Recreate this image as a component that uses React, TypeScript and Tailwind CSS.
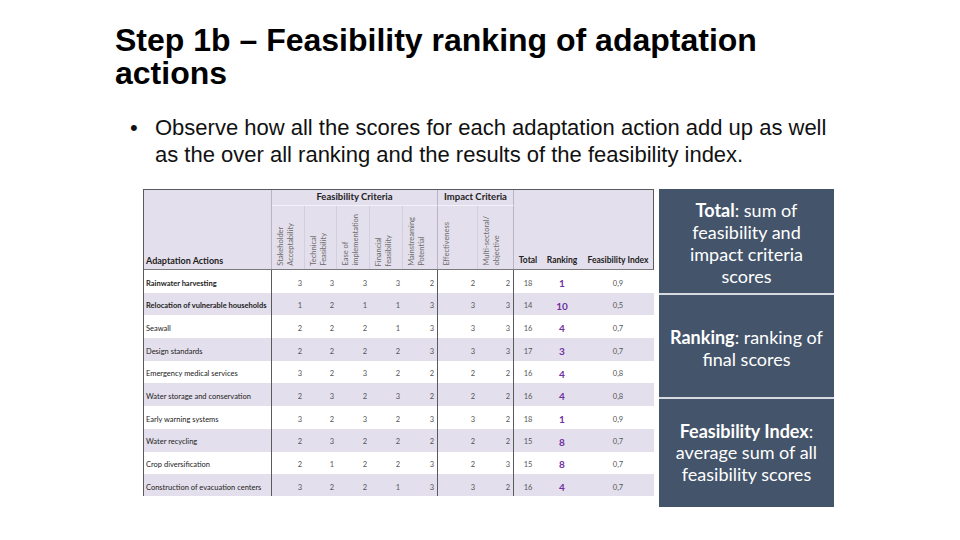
import React from 'react';

type Row = {
  name: string;
  strong?: boolean;
  feas: number[];
  impact: number[];
  total: number;
  rank: number;
  index: string;
};

const ROWS: Row[] = [
  { name: 'Rainwater harvesting', strong: true, feas: [3, 3, 3, 3, 2], impact: [2, 2], total: 18, rank: 1, index: '0,9' },
  { name: 'Relocation of vulnerable households', strong: true, feas: [1, 2, 1, 1, 3], impact: [3, 3], total: 14, rank: 10, index: '0,5' },
  { name: 'Seawall', feas: [2, 2, 2, 1, 3], impact: [3, 3], total: 16, rank: 4, index: '0,7' },
  { name: 'Design standards', feas: [2, 2, 2, 2, 3], impact: [3, 3], total: 17, rank: 3, index: '0,7' },
  { name: 'Emergency medical services', feas: [3, 2, 3, 2, 2], impact: [2, 2], total: 16, rank: 4, index: '0,8' },
  { name: 'Water storage and conservation', feas: [2, 3, 2, 3, 2], impact: [2, 2], total: 16, rank: 4, index: '0,8' },
  { name: 'Early warning systems', feas: [3, 2, 3, 2, 3], impact: [3, 2], total: 18, rank: 1, index: '0,9' },
  { name: 'Water recycling', feas: [2, 3, 2, 2, 2], impact: [2, 2], total: 15, rank: 8, index: '0,7' },
  { name: 'Crop diversification', feas: [2, 1, 2, 2, 3], impact: [2, 3], total: 15, rank: 8, index: '0,7' },
  { name: 'Construction of evacuation centers', feas: [3, 2, 2, 1, 3], impact: [3, 2], total: 16, rank: 4, index: '0,7' },
];

const CRITERIA: string[][] = [
  ['Stakeholder', 'Acceptability'],
  ['Technical', 'Feasibility'],
  ['Ease of', 'implementation'],
  ['Financial', 'feasibility'],
  ['Mainstreaming', 'Potential'],
  ['Effectiveness'],
  ['Multi-sectoral/', 'objective'],
];

const COLS = 'grid grid-cols-[128px_33px_32px_33px_33px_35px_40px_36px_28px_40px_72px]';

function RotatedHead({ lines, last }: { lines: string[]; last?: boolean }) {
  return (
    <div
      className={`flex items-end justify-start pl-[4px] pb-[3px] border-r ${
        last ? 'border-[#b9b4c6]' : 'border-[#d3cfdc]'
      }`}
    >
      <span className="[writing-mode:vertical-rl] rotate-180 text-[7.5px] leading-[10px] text-[#6a6a6a]">
        {lines.map((l, i) => (
          <React.Fragment key={i}>
            {i > 0 && <br />}
            {l}
          </React.Fragment>
        ))}
      </span>
    </div>
  );
}

function ScoreTable() {
  return (
    <div className="w-[511px] h-[307px] overflow-hidden border-l border-t border-[#5a5a5a] font-['Lato','Open_Sans',sans-serif] text-[#333]">
      {/* Header */}
      <div className={`${COLS} grid-rows-[16px_63px] bg-[#e4dfec] border-b border-[#7a7a7a] border-r border-r-[#5a5a5a]`}>
        <div className="row-span-2 flex items-end pl-[2px] pb-[2px] border-r border-[#b9b4c6] text-[9px] font-bold text-[#222]">
          Adaptation Actions
        </div>
        <div className="col-span-5 flex items-center justify-center border-b border-r border-[#f4f2f8] border-r-[#b9b4c6] text-[9.5px] font-bold text-[#222]">
          Feasibility Criteria
        </div>
        <div className="col-span-2 flex items-center justify-center border-b border-r border-[#f4f2f8] border-r-[#b9b4c6] text-[9.5px] font-bold text-[#222]">
          Impact Criteria
        </div>
        <div className="row-span-2 flex items-end justify-center pb-[2px] text-[8.5px] font-bold text-[#222]">Total</div>
        <div className="row-span-2 flex items-end justify-center pb-[2px] text-[8.5px] font-bold text-[#222]">Ranking</div>
        <div className="row-span-2 flex items-end justify-center pb-[2px] text-[8.5px] font-bold text-[#222] whitespace-nowrap">
          Feasibility Index
        </div>
        {CRITERIA.map((c, i) => (
          <RotatedHead key={i} lines={c} last={i === 4 || i === 6} />
        ))}
      </div>

      {/* Rows */}
      {ROWS.map((r, i) => (
        <div
          key={r.name}
          className={`${COLS} h-[22.7px] text-[7.5px] leading-none ${i % 2 === 1 ? 'bg-[#e4dfec]' : 'bg-white'}`}
        >
          <div
            className={`flex items-center pl-[2px] pt-[4px] border-r border-[#5a5a5a] whitespace-nowrap text-[#222] ${
              r.strong ? 'font-bold' : ''
            }`}
          >
            {r.name}
          </div>
          {r.feas.map((v, j) => (
            <div
              key={j}
              className={`flex items-center justify-end pr-[3px] pt-[4px] text-[#555] ${
                j === 4 ? 'border-r border-[#5a5a5a]' : ''
              }`}
            >
              {v}
            </div>
          ))}
          {r.impact.map((v, j) => (
            <div
              key={j}
              className={`flex items-center justify-end pr-[3px] pt-[4px] text-[#555] ${
                j === 1 ? 'border-r border-[#5a5a5a]' : ''
              }`}
            >
              {v}
            </div>
          ))}
          <div className="flex items-center justify-center pt-[4px] text-[#555]">{r.total}</div>
          <div className="flex items-center justify-center pt-[3px] text-[10px] font-bold text-[#7030a0]">{r.rank}</div>
          <div className="flex items-center justify-center pt-[4px] text-[#555]">{r.index}</div>
        </div>
      ))}
    </div>
  );
}

function Legend() {
  return (
    <div className="w-[175px] h-[318px] bg-[#44546a] flex flex-col text-white font-['Lato','Open_Sans',sans-serif] text-[18px] leading-[22px] text-center">
      <div className="h-[104px] flex items-center justify-center pt-[4px]">
        <p>
          <b>Total</b>: sum of
          <br />
          feasibility and
          <br />
          impact criteria
          <br />
          scores
        </p>
      </div>
      <div className="h-[2px] bg-[#d7dbe1]" />
      <div className="h-[102px] flex items-center justify-center pt-[4px]">
        <p className="whitespace-nowrap">
          <b>Ranking</b>: ranking of
          <br />
          final scores
        </p>
      </div>
      <div className="h-[2px] bg-[#d7dbe1]" />
      <div className="flex-1 flex items-center justify-center leading-[21.5px]">
        <p className="whitespace-nowrap">
          <b>Feasibility Index</b>:
          <br />
          average sum of all
          <br />
          feasibility scores
        </p>
      </div>
    </div>
  );
}

export default function App() {
  return (
    <div className="w-[960px] h-[540px] bg-white overflow-hidden font-['Liberation_Sans',Arial,sans-serif] text-black">
      <h1 className="pl-[115px] pt-[24px] text-[32px] leading-[33px] font-bold">
        Step 1b – Feasibility ranking of adaptation
        <br />
        actions
      </h1>

      <div className="flex pl-[130px] mt-[24px] text-[22px] leading-[27px] text-[#111]">
        <span className="w-[25px] shrink-0">•</span>
        <p className="whitespace-nowrap">
          Observe how all the scores for each adaptation action add up as well
          <br />
          as the over all ranking and the results of the feasibility index.
        </p>
      </div>

      <div className="flex items-start gap-[5px] pl-[143px] mt-[21px]">
        <ScoreTable />
        <Legend />
      </div>
    </div>
  );
}
